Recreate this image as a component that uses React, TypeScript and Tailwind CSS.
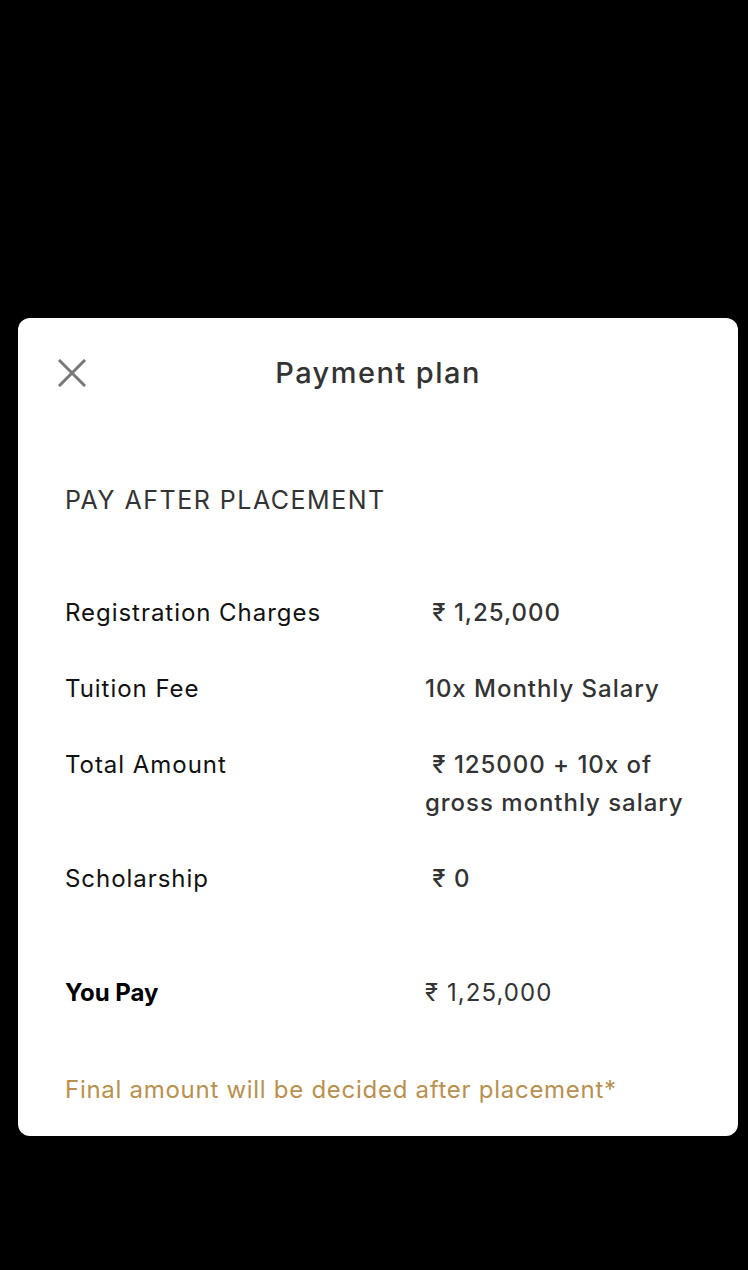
import React from "react";

const rows: { label: string; value: string }[] = [
  { label: "Registration Charges", value: "\u00a0₹ 1,25,000" },
  { label: "Tuition Fee", value: "10x Monthly Salary" },
  { label: "Total Amount", value: "\u00a0₹ 125000 + 10x of gross monthly salary" },
  { label: "Scholarship", value: "\u00a0₹ 0" },
];

export default function App() {
  return (
    <div
      className="min-h-[1270px] w-full bg-black pt-[318px] pl-[18px]"
      style={{ fontFamily: "Inter, 'Noto Sans', sans-serif" }}
    >
      <div className="w-[720px] rounded-[12px] bg-white px-[47px] pt-[36px] pb-[27px]">
        <div className="relative flex h-[38px] items-center justify-center">
          <button className="absolute left-[-7px] top-[5px] flex h-[28px] w-[28px] items-center justify-center text-[#777]">
            <svg width="28" height="28" viewBox="0 0 28 28" fill="none" stroke="currentColor" strokeWidth="3" strokeLinecap="square">
              <path d="M2 2 L26 26 M26 2 L2 26" />
            </svg>
          </button>
          <h1 className="text-[29px] font-medium leading-[38px] tracking-[0.05em] text-[#333]">Payment plan</h1>
        </div>

        <div className="mt-[89px] text-[25px] leading-[38px] tracking-[0.06em] text-[#333]">PAY AFTER PLACEMENT</div>

        <div className="mt-[75px] flex flex-col gap-[38px]">
          {rows.map((r) => (
            <div key={r.label} className="grid grid-cols-[360px_1fr] text-[24px] leading-[38px] tracking-[0.04em]">
              <div className="text-[#111]">{r.label}</div>
              <div className="font-medium text-[#333]">{r.value}</div>
            </div>
          ))}
        </div>

        <div className="mt-[76px] grid grid-cols-[360px_1fr] text-[24px] leading-[38px]">
          <div className="font-bold text-black">You Pay</div>
          <div className="tracking-[0.045em] text-[#333]">₹ 1,25,000</div>
        </div>

        <div className="mt-[59px] text-[24px] leading-[38px] tracking-[0.03em] text-[#b8904f]">
          Final amount will be decided after placement*
        </div>
      </div>
    </div>
  );
}
